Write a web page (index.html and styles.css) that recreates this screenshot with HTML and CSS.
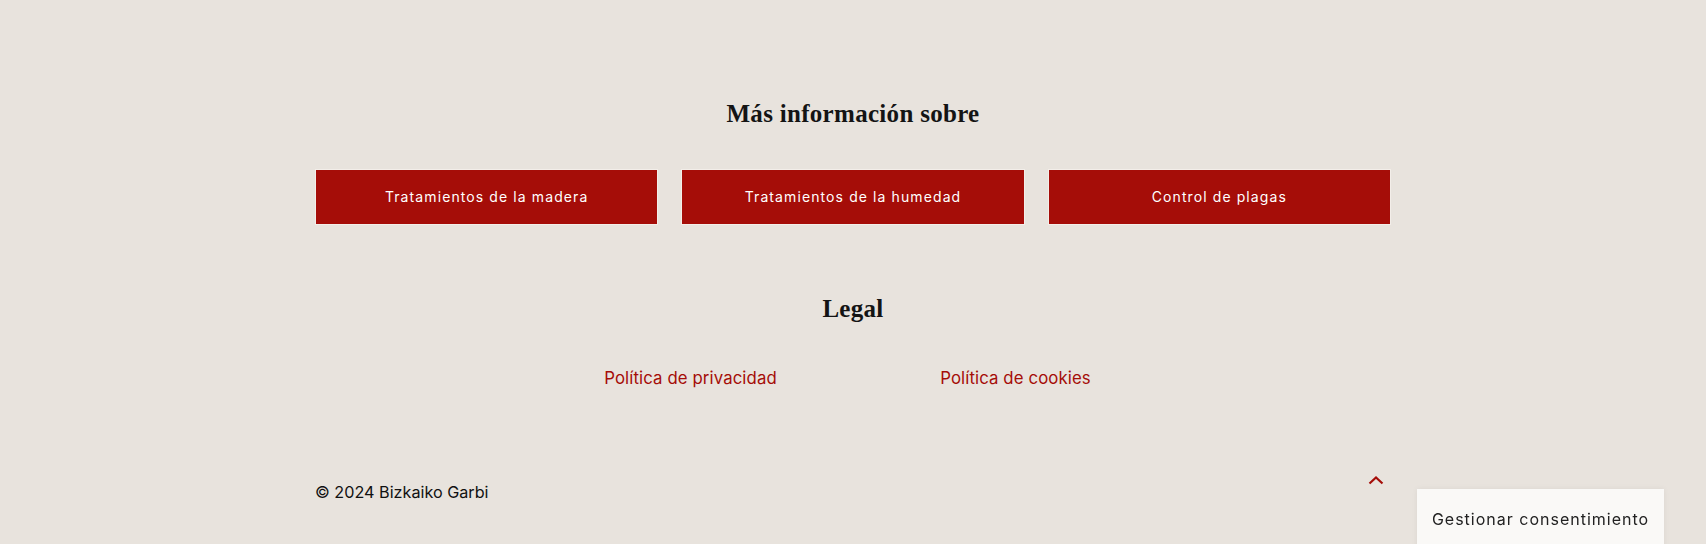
FILE: index.html
```html
<!DOCTYPE html>
<html lang="es">
<head>
<meta charset="utf-8">
<title>Bizkaiko Garbi</title>
<link rel="stylesheet" href="styles.css">
</head>
<body>
<footer class="site-footer">
  <div class="container">
    <section class="more">
      <h2 class="section-title">Más información sobre</h2>
      <div class="btn-grid">
        <a class="btn" href="#">Tratamientos de la madera</a>
        <a class="btn" href="#">Tratamientos de la humedad</a>
        <a class="btn" href="#">Control de plagas</a>
      </div>
    </section>
    <section class="legal">
      <h2 class="section-title">Legal</h2>
      <div class="legal-links">
        <a class="legal-link" href="#">Política de privacidad</a>
        <a class="legal-link" href="#">Política de cookies</a>
      </div>
    </section>
    <div class="bottom-bar">
      <span class="copyright">© 2024 Bizkaiko Garbi</span>
      <a class="to-top" href="#" aria-label="Volver arriba">
        <svg width="16" height="10" viewBox="0 0 16 10"><path d="M1.5 8.5 L8 2.5 L14.5 8.5" fill="none" stroke="#a50d08" stroke-width="2.2"/></svg>
      </a>
    </div>
  </div>
</footer>
<div class="consent-tab">Gestionar consentimiento</div>
</body>
</html>
```

FILE: styles.css
```css
html, body {
  margin: 0;
  padding: 0;
}
body {
  background: #e8e3dd;
  font-family: "Inter", "Open Sans", sans-serif;
  color: #111;
  height: 544px;
  overflow: hidden;
}
.container {
  width: 1076px;
  margin: 0 auto;
  padding-top: 100px;
}
.section-title {
  margin: 0;
  font-family: "Liberation Serif", serif;
  font-weight: bold;
  font-size: 25px;
  line-height: 28.8px;
  letter-spacing: 0.3px;
  text-align: center;
  color: #141414;
}
.btn-grid {
  margin-top: 40px;
  display: grid;
  grid-template-columns: repeat(3, 1fr);
  column-gap: 23px;
}
.btn {
  height: 56px;
  box-sizing: border-box;
  display: flex;
  align-items: center;
  justify-content: center;
  background: #a50d08;
  border: 1px solid #f3eee9;
  color: #fff;
  text-decoration: none;
  font-size: 14px;
  letter-spacing: 1.1px;
}
.legal {
  margin-top: 70px;
}
.legal-links {
  width: 650px;
  margin: 42px auto 0;
  display: grid;
  grid-template-columns: 1fr 1fr;
}
.legal-link {
  text-align: center;
  color: #a50d08;
  text-decoration: none;
  font-size: 16.8px;
  line-height: 24px;
  letter-spacing: 0.1px;
}
.bottom-bar {
  margin-top: 90px;
  display: flex;
  justify-content: space-between;
  align-items: center;
}
.copyright {
  font-size: 16.2px;
  line-height: 24px;
  color: #111;
}
.to-top {
  display: flex;
  margin-right: 7px;
  margin-top: -24px;
}
.consent-tab {
  position: fixed;
  right: 42px;
  bottom: -10px;
  width: 247px;
  height: 65px;
  box-sizing: border-box;
  padding-top: 20px;
  background: #faf9f7;
  box-shadow: 0 0 6px rgba(0,0,0,0.06);
  font-size: 16px;
  letter-spacing: 1px;
  color: #222;
  text-align: center;
}
```
